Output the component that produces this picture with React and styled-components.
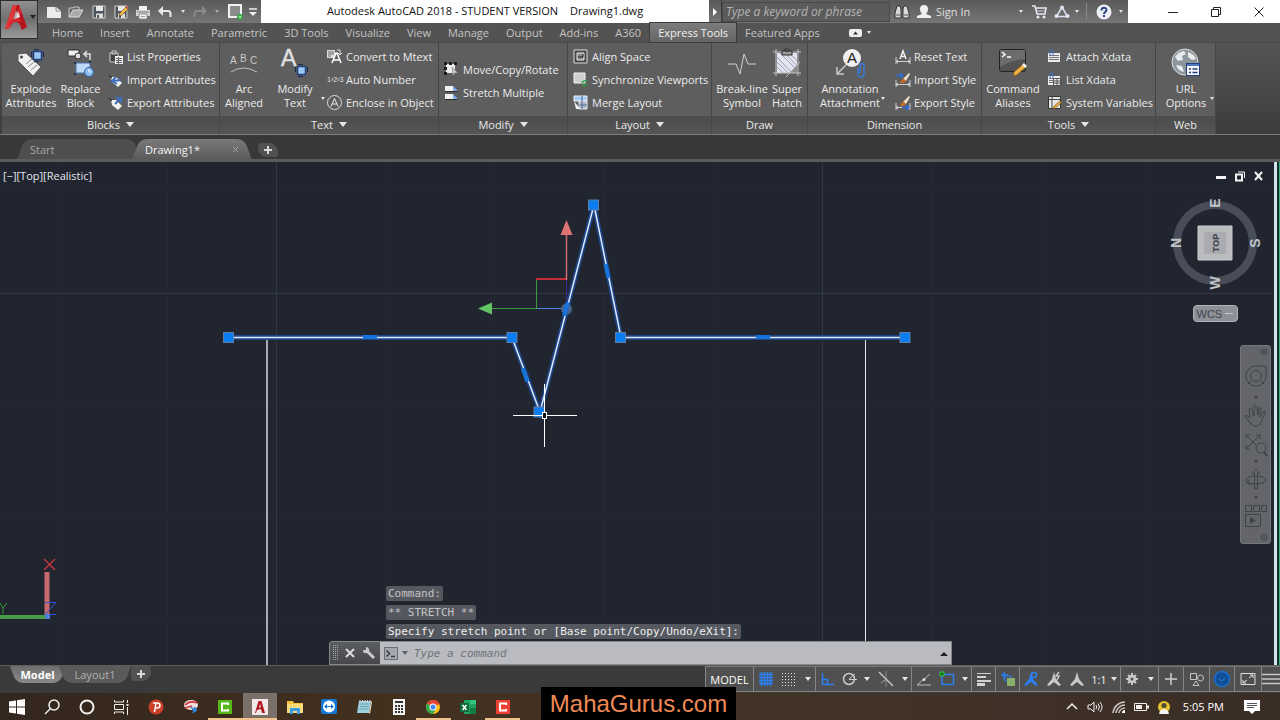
import React from 'react';
import styled, { createGlobalStyle } from 'styled-components';

const GlobalStyle = createGlobalStyle`
  * {
    box-sizing: border-box;
  }
  body {
    margin: 0;
    background: #3b3b3b;
    font-family: 'Open Sans', 'Noto Sans', sans-serif;
    font-size: 11px;
  }
  button, input {
    font: inherit;
    color: inherit;
    margin: 0;
    padding: 0;
    border: 0;
    background: none;
  }
  svg {
    display: block;
    flex: none;
  }
`;

const Svg = ({ w = 16, h = w, children }) => (
  <svg width={w} height={h} viewBox={`0 0 ${w} ${h}`} fill='none' overflow='visible'>
    {children}
  </svg>
);

/* ---------- shared pieces ---------- */

const Caret = styled.span`
  align-self: center;
  width: 0;
  height: 0;
  border: ${(p) => p.$size || 3}px solid transparent;
  border-bottom-width: 0;
  border-top: ${(p) => (p.$size || 3) + 1}px solid ${(p) => p.$color || '#e6e6e6'};
`;

const IconButton = styled.button`
  display: flex;
  align-items: center;
  justify-content: center;
  width: ${(p) => p.$width || 20}px;
  height: 100%;
`;

/* ---------- title bar ---------- */

const Header = styled.header`
  position: relative;
`;

const AppButton = styled.button`
  position: absolute;
  left: 0;
  top: 0;
  z-index: 2;
  display: flex;
  align-items: center;
  gap: 3px;
  width: 38px;
  height: 39px;
  padding: 0 0 6px 4px;
  border: 1px solid #2c2c2c;
  background: linear-gradient(#8f8f8f, #6f6f6f 50%, #9a9a9a);
`;

const TitleBar = styled.div`
  display: flex;
  height: 23px;
  background: #fff;
`;

const QuickAccess = styled.div`
  display: flex;
  align-items: center;
  justify-content: space-between;
  width: 261px;
  padding: 0 2px 0 44px;
  background: linear-gradient(#5a5a5a, #757575);
`;

const Title = styled.h1`
  flex: 1;
  display: flex;
  justify-content: center;
  gap: 12px;
  margin: 0;
  color: #111;
  font-size: 11px;
  font-weight: 400;
  line-height: 22px;
  white-space: pre;
`;

const InfoCenter = styled.div`
  display: flex;
  align-items: center;
  width: 419px;
  background: linear-gradient(#5a5a5a, #757575);
  color: #e0e0e0;
`;

const SearchToggle = styled(IconButton)`
  border-right: 1px solid #3a3a3a;
`;

const SearchInput = styled.input`
  width: 168px;
  height: 20px;
  padding: 0 3px;
  background: #5b5b5b;
  border: 1px solid #4a4a4a;
  font-size: 12px;
  font-style: italic;
  &::placeholder {
    color: #b4b4b4;
    opacity: 1;
  }
`;

const SignIn = styled.button`
  display: flex;
  align-items: center;
  justify-content: space-between;
  gap: 4px;
  width: 115px;
  padding: 0 6px 0 2px;
`;

const UserName = styled.span`
  flex: 1;
  text-align: left;
`;

const Divider = styled.span`
  width: 1px;
  height: 17px;
  margin: 0 7px;
  background: #8a8a8a;
`;

const WindowButtons = styled.div`
  display: flex;
  justify-content: flex-end;
  width: 152px;
`;

const MenuTabs = styled.nav`
  display: flex;
  align-items: stretch;
  gap: 1px;
  height: 19px;
  padding-left: 44px;
  background: #535353;
`;

const MenuTab = styled.button`
  padding: 0 8px;
  line-height: 18px;
  white-space: nowrap;
  color: ${(p) => (p.$active ? '#f0f0f0' : '#c4c4c4')};
  background: ${(p) => (p.$active ? 'linear-gradient(#7c7c7c, #656565)' : 'none')};
  box-shadow: ${(p) => (p.$active ? '0 0 0 1px #3c3c3c' : 'none')};
`;

const MenuMore = styled.button`
  display: flex;
  align-items: center;
  gap: 5px;
  margin-left: 20px;
`;

/* ---------- ribbon ---------- */

const Ribbon = styled.section`
  display: flex;
  height: 93px;
  padding-left: 2px;
  background: linear-gradient(#555, #3c3c3c);
  border-top: 1px solid #484848;
  border-bottom: 1px solid #7c7c7c;
`;

const Panel = styled.div`
  display: flex;
  flex-direction: column;
  width: ${(p) => p.$width}px;
  border-right: 1px solid #464646;
  box-shadow: inset -1px 0 #6c6c6c;
`;

const PanelBody = styled.div`
  flex: 1;
  display: flex;
  align-items: flex-start;
  padding: 2px 0 0 ${(p) => p.$pad || 0}px;
  background: #5e5e5e;
`;

const PanelTitle = styled.button`
  display: flex;
  align-items: center;
  justify-content: center;
  gap: 6px;
  height: 18px;
  padding-bottom: 1px;
  color: #e8e8e8;
  background: linear-gradient(#4c4c4c, #555);
`;

const BigButton = styled.button`
  position: relative;
  display: flex;
  flex-direction: column;
  align-items: center;
  width: ${(p) => p.$width}px;
  height: 70px;
  color: #ececec;
  line-height: 14px;
  white-space: pre;
`;

const BigIcon = styled.span`
  display: flex;
  align-items: center;
  justify-content: center;
  height: 36px;
  margin-bottom: 1px;
`;

const BigCaret = styled(Caret)`
  position: absolute;
  right: -2px;
  bottom: 15px;
`;

const RowList = styled.div`
  display: flex;
  flex-direction: column;
  align-self: ${(p) => (p.$centered ? 'center' : 'flex-start')};
  padding-left: ${(p) => p.$left || 0}px;
`;

const Row = styled.button`
  display: flex;
  align-items: center;
  gap: 4px;
  height: 23px;
  color: #ececec;
  white-space: nowrap;
`;

const RowIcon = styled.span`
  display: flex;
  justify-content: center;
  width: 15px;
`;

/* ---------- drawing tabs ---------- */

const FileTabs = styled.div`
  display: flex;
  align-items: flex-end;
  height: 27px;
  padding-left: 21px;
  background: #383838;
  border-bottom: 3px solid #5c5c5c;
`;

const TabShape = styled.button`
  position: relative;
  z-index: 0;
  display: flex;
  align-items: center;
  &::before,
  &::after {
    content: '';
    position: absolute;
    z-index: -1;
    top: 0;
    bottom: 0;
    background: ${(p) => p.$fill};
  }
  &::before {
    left: 0;
    right: 50%;
    border-radius: ${(p) => (p.$down ? '0 0 0 7px' : '7px 0 0 0')};
    transform: skewX(${(p) => (p.$down ? 20 : -20)}deg);
  }
  &::after {
    left: calc(50% - 12px);
    right: 0;
    border-radius: ${(p) => (p.$down ? '0 0 7px 0' : '0 7px 0 0')};
    transform: skewX(${(p) => (p.$down ? -20 : 20)}deg);
  }
`;

const FileTab = styled(TabShape)`
  justify-content: space-between;
  width: ${(p) => p.$width}px;
  height: 20px;
  padding: 0 9px;
  color: ${(p) => (p.$active ? '#f2f2f2' : '#a8a8a8')};
`;

const NewTab = styled.button`
  display: flex;
  align-items: center;
  justify-content: center;
  width: 20px;
  height: ${(p) => p.$height}px;
  margin: 0 0 ${(p) => p.$bottom || 0}px ${(p) => p.$left}px;
  background: #525252;
  border-radius: ${(p) => (p.$bottom ? '3px 9px 3px 9px' : '2px 2px 9px 3px')};
`;

/* ---------- canvas ---------- */

const Canvas = styled.main`
  position: relative;
  flex: 1;
  min-height: 503px;
  overflow: hidden;
  background: #212530;
  border-right: 1px solid #3fae86;
  box-shadow: inset -2px 0 #12302c, inset -5px 0 #d4e4ee;
`;

const Drawing = styled.svg`
  position: absolute;
  left: 0;
  top: 0;
  width: calc(100% - 5px);
  height: 100%;
`;

const ViewportBar = styled.div`
  position: relative;
  display: flex;
  justify-content: space-between;
  align-items: center;
  height: 27px;
  padding: 0 11px 0 3px;
  color: #e4e6ea;
`;

const ViewportButtons = styled.div`
  display: flex;
  gap: 1px;
  height: 18px;
`;

const ViewTools = styled.div`
  position: absolute;
  right: 17px;
  top: 30px;
  display: flex;
  flex-direction: column;
  align-items: center;
`;

const WcsButton = styled.button`
  display: flex;
  align-items: center;
  justify-content: space-between;
  width: 45px;
  height: 17px;
  margin-top: 8px;
  padding: 0 4px 0 3px;
  border: 1px solid #b2b4ba;
  border-radius: 4px;
  background: #8e9098;
  color: #40434c;
  font-family: 'Liberation Sans', sans-serif;
`;

const NavBar = styled.div`
  position: absolute;
  right: 8px;
  top: 183px;
  display: flex;
  flex-direction: column;
  align-items: center;
  justify-content: space-between;
  width: 31px;
  height: 199px;
  padding: 1px 0;
  border: 1px solid #74767b;
  border-radius: 3px;
  background: #63656a;
`;

const NavButton = styled.button`
  display: flex;
  align-items: center;
  justify-content: center;
  width: ${(p) => (p.$end ? 12 : 29)}px;
  height: ${(p) => p.$height}px;
  align-self: ${(p) => (p.$end ? 'flex-end' : 'auto')};
`;

const CommandArea = styled.div`
  position: absolute;
  left: 329px;
  right: 327px;
  bottom: 0;
  font-family: 'DejaVu Sans Mono', monospace;
`;

const History = styled.div`
  display: flex;
  flex-direction: column;
  align-items: flex-start;
  gap: 4px;
  padding: 0 0 2px 57px;
`;

const HistoryLine = styled.span`
  padding: 0 2px;
  border-radius: 2px;
  line-height: 15px;
  background: #55585e;
  color: ${(p) => (p.$latest ? '#f0f0f0' : '#c2c3c6')};
`;

const CommandBar = styled.div`
  display: flex;
  height: 24px;
  border: 1px solid #85878b;
  border-radius: 3px 0 0 0;
  background: #b9bbc0;
`;

const CommandHandle = styled.div`
  display: flex;
  align-items: center;
  justify-content: space-between;
  width: 50px;
  padding: 0 2px;
  background: linear-gradient(#5b5d61, #45474b);
`;

const CommandInput = styled.input`
  flex: 1;
  min-width: 0;
  padding: 0 6px;
  font-style: italic;
  &::placeholder {
    color: #70737a;
    opacity: 1;
  }
`;

/* ---------- status bar ---------- */

const StatusBar = styled.footer`
  display: flex;
  justify-content: space-between;
  height: 28px;
  background: #3a3a3a;
  border-top: 1px solid #5c5c5c;
`;

const LayoutTabs = styled.div`
  display: flex;
  align-items: flex-start;
  padding-left: 13px;
`;

const LayoutTab = styled(TabShape)`
  justify-content: center;
  width: ${(p) => p.$width}px;
  height: 17px;
  color: ${(p) => (p.$active ? '#fff' : '#b0b0b0')};
  font-weight: ${(p) => (p.$active ? 700 : 400)};
`;

const StatusTools = styled.div`
  display: flex;
  height: 26px;
  background: #505050;
  border-top: 1px solid #777;
  border-bottom: 1px solid #858585;
`;

const StatusGroup = styled.div`
  display: flex;
  align-items: center;
  justify-content: space-around;
  width: ${(p) => p.$width}px;
  border-left: 1px solid #858585;
`;

const StatusText = styled.button`
  width: 100%;
  color: #fff;
`;

const ScaleButton = styled.button`
  display: flex;
  align-items: center;
  gap: 4px;
  color: #f0f0f0;
`;

/* ---------- taskbar ---------- */

const Taskbar = styled.nav`
  position: relative;
  display: flex;
  justify-content: space-between;
  height: 27px;
  background: linear-gradient(90deg, #33261e, #42301f 30%, #433428 60%, #3a2d25);
`;

const TaskGroup = styled.div`
  display: flex;
  width: ${(p) => p.$width}px;
`;

const TaskButton = styled.button`
  flex: 1;
  display: flex;
  align-items: center;
  justify-content: center;
  background: ${(p) => (p.$current ? '#7b7069' : 'none')};
  box-shadow: ${(p) => (p.$open ? 'inset 0 -2px #f0c48c' : 'none')};
`;

const Tray = styled.div`
  display: flex;
  align-items: center;
  padding-right: 18px;
  color: #fff;
`;

const Clock = styled.span`
  padding: 0 18px 0 8px;
`;

const Watermark = styled.div`
  position: absolute;
  left: calc(50% - 99px);
  bottom: 0;
  width: 195px;
  height: 33px;
  background: #000;
  color: #f08a55;
  font-family: 'Liberation Sans', sans-serif;
  font-size: 24px;
  line-height: 33px;
  text-align: center;
`;

const Page = styled.div`
  display: flex;
  flex-direction: column;
  min-height: 100vh;
`;

/* ---------- icons ---------- */

const AutocadMark = () => (
  <Svg w={22} h={26}>
    <path d='M8 1h6l8 22-5 3-3-7-6-2-3 7-5 1z' fill='#b3161d' />
    <path d='M8 1h4L5 24l-5 1z' fill='#e2383c' />
    <path d='M14 1l3 8-6 6-3 1 5-9z' fill='#d3272d' />
    <path d='M11 6l3 8-6 2z' fill='#b9a5a5' />
    <path d='M3 20q4-6 12-6l1 4q-7-1-12 4z' fill='#d8262c' />
    <path d='M13 7l2 6-4 1z' fill='#efe4e4' />
  </Svg>
);

const NewIcon = () => (
  <Svg w={16}>
    <path d='M1 3h9l5 4v7H1z' fill='#ececec' />
    <path d='M10 3v4h5' stroke='#8a8a8a' />
  </Svg>
);

const OpenIcon = () => (
  <Svg w={16}>
    <path d='M1 13V4h4l1-1h5v3' stroke='#c8c8c8' />
    <path d='M1 13l4-7h10l-4 7z' fill='#a9a9a9' stroke='#d9d9d9' />
  </Svg>
);

const SaveIcon = ({ pencil }) => (
  <Svg w={16}>
    <path d='M2 2h12v12H2z' fill='#4f545c' stroke='#cfd2d6' />
    <path d='M5 2h7v5H5z' fill='#e8e8e8' />
    <path d='M5 9.500h7V14H5z' fill='#dcdcdc' />
    <path d='M6 11h2v3H6z' fill='#555' />
    {pencil && (
      <g>
        <path d='M6 12l1-3 6-6 2 2-6 6z' fill='#f2bd4b' stroke='#6a4a1c' strokeWidth='.6' />
        <path d='M12.500 3.500l1.500-1.500 2 2-1.500 1.500z' fill='#d24a3a' />
      </g>
    )}
  </Svg>
);

const PrintIcon = () => (
  <Svg w={16}>
    <path d='M4 2h8v4H4z' fill='#efefef' />
    <path d='M1 6h14v6H1z' fill='#d6d6d6' />
    <path d='M2 8h12' stroke='#777' />
    <path d='M4 10h8v5H4z' fill='#f6f6f6' stroke='#888' />
    <path d='M6 12.500h4' stroke='#999' />
  </Svg>
);

const UndoIcon = ({ color = '#e8e8e8', flip }) => (
  <Svg w={16}>
    <g transform={flip ? 'translate(16 0) scale(-1 1)' : undefined}>
      <path d='M5 7h6q2.500 0 2.500 3v3' stroke={color} strokeWidth='2' />
      <path d='M1 7l5-5v10z' fill={color} />
    </g>
  </Svg>
);

const PlotIcon = () => (
  <Svg w={16}>
    <path d='M2 1h12v12H2z' fill='#8c8c8c' stroke='#f0f0f0' strokeWidth='2' />
    <circle cx='13' cy='13' r='3' fill='#2fa33a' />
    <path d='M11.500 13h3M13 11.500v3' stroke='#b9f0b9' />
  </Svg>
);

const BarCaretIcon = () => (
  <Svg w={10}>
    <path d='M1 2h8' stroke='#eee' strokeWidth='1.500' />
    <path d='M1 5h8L5 9z' fill='#eee' />
  </Svg>
);

const BinocularsIcon = () => (
  <Svg w={16}>
    <path d='M3 2h3l1 3v9H1V9z' fill='#d8d8d8' stroke='#333' />
    <path d='M13 2h-3L9 5v9h6V9z' fill='#d8d8d8' stroke='#333' />
    <path d='M7 6h2v4H7z' fill='#555' />
    <path d='M2 11h4M10 11h4' stroke='#555' />
  </Svg>
);

const UserIcon = () => (
  <Svg w={16}>
    <path d='M8 1c3 0 4 2 4 4 0 2-1 4-2 5l5 2v2H1v-2l5-2C5 9 4 7 4 5c0-2 1-4 4-4z' fill='#f0f0f0' />
  </Svg>
);

const CartIcon = () => (
  <Svg w={16}>
    <path d='M1 2h3l2 8h8l1-6H5' stroke='#e6e8f2' strokeWidth='1.500' />
    <path d='M6 7h8' stroke='#c3c8de' />
    <circle cx='7' cy='13' r='1.500' fill='#e6e8f2' />
    <circle cx='13' cy='13' r='1.500' fill='#e6e8f2' />
  </Svg>
);

const ShareIcon = () => (
  <Svg w={16}>
    <path d='M8 3L2.500 12.500h11z' stroke='#dfe2f0' strokeWidth='1.500' />
    <circle cx='8' cy='3.500' r='2' fill='#dfe2f0' />
    <circle cx='2.500' cy='12' r='2' fill='#dfe2f0' />
    <circle cx='13.500' cy='12' r='2' fill='#dfe2f0' />
  </Svg>
);

const HelpIcon = () => (
  <Svg w={16}>
    <circle cx='8' cy='8' r='7.500' fill='#eef0f6' />
    <path d='M5.500 6.500c0-3.500 5-3.500 5-.5 0 2-2.500 2-2.500 4' stroke='#2c4586' strokeWidth='2' />
    <path d='M7 11h2v2H7z' fill='#2c4586' />
  </Svg>
);

const MinimizeIcon = () => (
  <Svg w={12}><path d='M1 6.500h10' stroke='#222' /></Svg>
);

const RestoreIcon = () => (
  <Svg w={12}>
    <path d='M1.500 3.500h7v7h-7z' stroke='#222' />
    <path d='M3.500 3.500v-2h7v7h-2' stroke='#222' />
  </Svg>
);

const CloseIcon = () => (
  <Svg w={12}><path d='M1.500 1.500l9 9M10.500 1.500l-9 9' stroke='#222' /></Svg>
);

const BlockSquare = ({ x, y }) => (
  <g transform={`translate(${x} ${y})`}>
    <path d='M2.500 2.500h8v8h-8z' fill='#9cc6f5' stroke='#1f3f7a' strokeWidth='1.500' />
    <path d='M.5 3v7M12.500 3v7M3 .5h7M3 12.500h7' stroke='#15294d' strokeDasharray='5 2' />
  </g>
);

const ExplodeIcon = () => (
  <Svg w={30} h={30}>
    <path d='M2 6l8-1 15 14-8 9L2 13z' fill='#f0f0f0' stroke='#555' />
    <circle cx='5.500' cy='9' r='1.500' fill='#444' />
    <path d='M10 16l6-5M12 19l6-5M15 22l6-5' stroke='#888' />
    <BlockSquare x={15} y={1} />
  </Svg>
);

const ReplaceIcon = () => (
  <Svg w={30} h={30}>
    <path d='M2 2h11v6H2z' fill='#f1f1f1' stroke='#2c2c2c' />
    <circle cx='12' cy='8' r='3' fill='#ddd' stroke='#333' />
    <path d='M24 12V6h-5M21 3l-3 3 3 3' stroke='#ddd' strokeWidth='1.500' />
    <path d='M10 15h14v10H10z' fill='#bcd9f8' stroke='#4a6ea8' />
    <circle cx='23' cy='24' r='4.500' fill='#8dbdf0' stroke='#2f62a8' />
    <path d='M23 21v3h2' stroke='#fff' />
    <path d='M8 14h2v2H8zM23 13h2v2h-2zM8 25h2v2H8z' fill='#1d3358' />
  </Svg>
);

const ArcIcon = () => (
  <Svg w={30} h={26}>
    <path d='M2 22q12-8 26 0' stroke='#c4c4c4' />
    <g fill='#c9c9c9' fontFamily='Liberation Sans, sans-serif' fontSize='10'>
      <text x='1' y='14'>A</text>
      <text x='11' y='12'>B</text>
      <text x='21' y='14'>C</text>
    </g>
  </Svg>
);

const ModifyTextIcon = () => (
  <Svg w={30} h={30}>
    <text x='1' y='18' fill='#e0e0e0' stroke='#e0e0e0' strokeWidth='.5' fontFamily='Liberation Sans, sans-serif' fontSize='23'>A</text>
    <BlockSquare x={15} y={16} />
  </Svg>
);

const BreakIcon = () => (
  <Svg w={30} h={26}>
    <path d='M1 14h8l4 10 4-20 4 10h8' stroke='#cfcfcf' />
  </Svg>
);

const HatchIcon = () => (
  <Svg w={30} h={30}>
    <path d='M5 5h20v14l-6 6H5z' fill='#e4e5f0' />
    <path d='M5 9l14 15M5 14l11 11M5 19l6 6M8 5l16 16M13 5l12 13M18 5l7 8' stroke='#9a9db4' />
    <path d='M25 17l-8 8h8z' fill='#8a8a8a' />
    <path d='M4 1v27M26 1v27M1 4h28M1 25h28' stroke='#c4c4c4' />
    <path d='M10 3h10v4H10zM13 1h4v2h-4z' fill='#999' stroke='#2f2f2f' />
    <path d='M28 14L14 29' stroke='#bdbdbd' />
  </Svg>
);

const AnnotationIcon = () => (
  <Svg w={30} h={30}>
    <circle cx='17' cy='10' r='9' fill='#f0f0f0' />
    <text x='12' y='15' fill='#222' fontFamily='Liberation Sans, sans-serif' fontSize='15'>A</text>
    <path d='M11 17l-8 8M2 19v7h7' stroke='#c8c8c8' strokeWidth='1.500' />
    <path d='M23 20v6q0 3 3 3t3-3v-8q0-2.500-2-2.500t-2 2.500v7' stroke='#3a7ad6' strokeWidth='1.500' />
  </Svg>
);

const AliasIcon = () => (
  <Svg w={30} h={30}>
    <rect x='1.500' y='1.500' width='26' height='22' rx='2' fill='#525252' stroke='#222' />
    <path d='M2 2h25v9q-13 1-25 8z' fill='#6c6c6c' />
    <path d='M4 4l3 2.500L4 9M9 9h4' stroke='#fff' strokeWidth='1.500' />
    <path d='M15 28l1-4 9-8 3 3-9 8z' fill='#f0b040' stroke='#6b4a16' strokeWidth='.7' />
    <path d='M24 17l2-2 3 3-2 2z' fill='#eee' />
  </Svg>
);

const UrlIcon = () => (
  <Svg w={30} h={30}>
    <circle cx='14' cy='14' r='13' fill='#8d969c' stroke='#d9dcde' />
    <path d='M4 9q3-5 9-6l2 3-4 2 1 4-5 1zM17 4q6 2 8 7l-4 1-4-3zM5 17l6 1 2 6q-6-1-8-7z' fill='#e8ecee' />
    <rect x='15.500' y='15.500' width='13' height='12' fill='#f4f6fa' stroke='#24407a' />
    <path d='M16 17h12' stroke='#4c77c4' strokeWidth='2' />
    <path d='M18 21h2M18 24.500h2M21.500 21h5M21.500 24.500h5' stroke='#24407a' strokeWidth='1.500' />
  </Svg>
);

const ListPropsIcon = () => (
  <Svg w={14}>
    <path d='M1 3h8v9H1zM3 1h4v3H3z' fill='#444' stroke='#cacaca' />
    <path d='M6 6h8v8H6z' fill='#efefef' />
    <path d='M7 8.500h6M7 10.500h6M7 12.500h6M9.500 7v7' stroke='#666' />
  </Svg>
);

const TagArrowIcon = ({ flip }) => (
  <Svg w={14}>
    <path d='M2 4l5 0 6 6-4 4-6-5z' fill='#efefef' />
    <path d={flip ? 'M6 8l5-5M7 2l5 0 0 5' : 'M12 7L4 8M7 4L3 8l5 3'} stroke='#3f6fc0' strokeWidth='2' />
    <path d='M0 2l3 3' stroke='#222' />
  </Svg>
);

const MtextIcon = () => (
  <Svg w={15}>
    <path d='M0 1h8v8H0z' fill='#dcdcdc' />
    <path d='M1 3h6M1 5h6M1 7h3' stroke='#666' />
    <path d='M5 14L9 4h1l4 10M6.500 11h6' stroke='#fff' strokeWidth='1.500' />
    <path d='M10 1h3v4M11 4l2 2 2-2' stroke='#ddd' />
  </Svg>
);

const NumberIcon = () => (
  <Svg w={15}>
    <text x='0' y='10' fill='#e0e0e0' fontFamily='Liberation Sans, sans-serif' fontSize='7'>1›2›3</text>
  </Svg>
);

const EncloseIcon = () => (
  <Svg w={15}>
    <circle cx='7.500' cy='7.500' r='7' stroke='#dcdcdc' />
    <path d='M4 11.500l3.500-8 3.500 8M5.500 9h4' stroke='#eee' />
  </Svg>
);

const MoveCopyIcon = () => (
  <Svg w={15}>
    <path d='M2 2h9v9H2z' fill='#eee' />
    <path d='M0 0h3v3H0zM5 0h3v3H5zM10 0h3v3h-3zM0 5h3v3H0zM0 10h3v3H0z' fill='#1c1c1c' />
    <path d='M8 5l6 6-3 0-2 3z' fill='#c8c8c8' stroke='#666' strokeWidth='.5' />
  </Svg>
);

const StretchIcon = () => (
  <Svg w={15}>
    <path d='M1 1h8v5H1zM1 9h8v5H1z' fill='#f0f0f0' />
    <path d='M9 1l5 5H9zM9 9l5 5H9z' fill='#7fb0ee' />
    <path d='M1 6.500h13M1 14.500h13' stroke='#2a2a2a' />
  </Svg>
);

const AlignSpaceIcon = () => (
  <Svg w={15}>
    <path d='M1 1h13v13H1z' fill='#444' stroke='#ddd' />
    <path d='M4 4h7v7H4z' fill='#888' stroke='#eee' />
    <path d='M5 8h5V5' stroke='#222' />
  </Svg>
);

const SyncIcon = () => (
  <Svg w={15}>
    <path d='M1 1h11v10H1z' fill='#cfcfcf' stroke='#f3f3f3' />
    <path d='M9 11a3 3 0 0 1 5-1M14 12a3 3 0 0 1-5 1' stroke='#2ea043' strokeWidth='1.500' />
  </Svg>
);

const MergeIcon = () => (
  <Svg w={15}>
    <path d='M1 1h13v5H1z' fill='#a8cbf5' stroke='#e8eef6' />
    <path d='M6 6h8v8H6z' fill='#b4b9c2' stroke='#e8eef6' />
    <path d='M9 1v13M6 10h8' stroke='#4a6a9c' />
    <path d='M1 6l6 8H3z' fill='#f3f3f3' />
  </Svg>
);

const DimIcon = ({ kind }) => (
  <Svg w={16}>
    <path d='M1 8v7M15 8v7M1 12.500h14M3 11l-2 1.500L3 14M13 11l2 1.500-2 1.500' stroke='#cfcfcf' />
    {kind === 'reset' ? (
      <g>
        <path d='M5 10l3-8 3 8M6 7.500h4' stroke='#f2f2f2' strokeWidth='1.500' />
        <path d='M12 1l2 2-2 2' stroke='#3f6fc0' />
      </g>
    ) : (
      <g>
        <path d='M8 7l6-6 1 1-4 7z' fill='#f0e3c8' />
        <path d='M5 11q1-4 4-4l2 2q-2 3-6 2z' fill='#c46a2c' />
        <path
          d={kind === 'import' ? 'M1 3.500h6M5 1l3 2.500L5 6' : 'M7 12.500h6M11 10l3 2.500-3 2.500'}
          stroke='#2f6fd6'
          strokeWidth='1.500'
        />
      </g>
    )}
  </Svg>
);

const XdataIcon = ({ table }) => (
  <Svg w={15}>
    <path d='M1 4h12v9H1z' fill='#ececec' />
    <path d='M2 6.500h10M2 8.500h10M2 10.500h10' stroke='#777' />
    {table && <path d='M6.500 6.500h7v7h-7zM6.500 9h7M6.500 11h7M10 7v6' fill='#e8e8e8' stroke='#555' />}
    <path d='M3 7V2q0-1.500 1.500-1.500T6 2v4' stroke='#3f6fc0' />
  </Svg>
);

const SysVarIcon = () => (
  <Svg w={15}>
    <path d='M1.500 1.500h12v12h-12z' fill='#e8e8e8' stroke='#333' />
    <path d='M5 2v11M2 4.500h11' stroke='#444' />
    <path d='M6 14l1-3 6-5 1.500 1.500-6 5.500z' fill='#f0a840' stroke='#6b4a16' strokeWidth='.6' />
  </Svg>
);

const PlusIcon = () => (
  <Svg w={10}><path d='M5 1v8M1 5h8' stroke='#d8d8d8' strokeWidth='2' /></Svg>
);

const TabCloseIcon = () => (
  <Svg w={7}><path d='M1 1l5 5M6 1L1 6' stroke='#a4a4a4' /></Svg>
);

/* status bar icons */

const GridIcon = () => (
  <Svg w={16}>
    <path d='M3.500 1v14M6.500 1v14M9.500 1v14M12.500 1v14M1 3.500h14M1 6.500h14M1 9.500h14M1 12.500h14' stroke='#2b7ff0' strokeWidth='1.500' />
  </Svg>
);

const SnapIcon = () => (
  <Svg w={16}>
    {[2, 5, 8, 11, 14].map((y) => (
      <path key={y} d={`M1 ${y}.5h14`} stroke='#e4e4e4' strokeDasharray='1 2' />
    ))}
  </Svg>
);

const OrthoIcon = () => (
  <Svg w={16}>
    <path d='M3.500 2v11.500H15M3.500 8.500h5v5' stroke='#2b7ff0' strokeWidth='1.500' />
  </Svg>
);

const PolarIcon = () => (
  <Svg w={16}>
    <circle cx='7' cy='8' r='5.500' stroke='#ccc' strokeWidth='1.500' />
    <path d='M7 8.500h8M7 8l6-5' stroke='#ccc' />
  </Svg>
);

const IsoIcon = () => (
  <Svg w={18}>
    <path d='M9 1v16' stroke='#888' />
    <path d='M2 2l14 14' stroke='#c4c4c4' strokeWidth='1.500' />
    <path d='M4 13l4-3' stroke='#aaa' />
  </Svg>
);

const TrackIcon = () => (
  <Svg w={16}>
    <path d='M1 14L14 3M1 14h14' stroke='#bdbdbd' />
    <circle cx='8' cy='8.500' r='1.500' fill='#ddd' />
  </Svg>
);

const OsnapIcon = () => (
  <Svg w={16}>
    <path d='M3 3.500h11.500v10H3z' stroke='#2b7ff0' strokeWidth='1.500' />
    <path d='M1 1h4v4H1z' fill='#0d6b12' stroke='#37c242' />
  </Svg>
);

const LineweightIcon = () => (
  <Svg w={16}>
    <path d='M1 2.500h14' stroke='#d2d2d2' />
    <path d='M1 6h9' stroke='#d2d2d2' strokeWidth='2' />
    <path d='M1 10h14' stroke='#d2d2d2' strokeWidth='2' />
    <path d='M1 13.500h8' stroke='#d2d2d2' strokeWidth='3' />
  </Svg>
);

const CyclingIcon = () => (
  <Svg w={16}>
    <path d='M4 1v7M1 4h7' stroke='#2b7ff0' strokeWidth='1.500' />
    <path d='M5 5h6v5H5z' stroke='#2b7ff0' />
    <path d='M7 7h8v8H7z' fill='#88b06a' />
  </Svg>
);

const ScaleIcon = ({ color, extra }) => (
  <Svg w={16}>
    <path d='M8 1l2 7 5 6-2 1-5-4-5 4-2-1 5-6z' fill={color} />
    {extra === 'ring' && <circle cx='11' cy='4' r='2.500' fill='#505050' stroke={color} strokeWidth='1.500' />}
    {extra === 'bolt' && <path d='M13 1l-3 4h3l-2 4' stroke={color} strokeWidth='1.500' />}
  </Svg>
);

const GearIcon = () => (
  <Svg w={14}>
    <path d='M7 1v12M1 7h12M3 3l8 8M11 3l-8 8' stroke='#c8c8c8' strokeWidth='2' />
    <circle cx='7' cy='7' r='4' fill='#c8c8c8' />
    <circle cx='7' cy='7' r='1.500' fill='#505050' />
  </Svg>
);

const CrossIcon = () => (
  <Svg w={14}><path d='M7 1v12M1 7h12' stroke='#d0d0d0' strokeWidth='1.500' /></Svg>
);

const ShapesIcon = () => (
  <Svg w={16}>
    <path d='M1.500 2.500h6v6h-6z' stroke='#c4c4c4' />
    <circle cx='11.500' cy='7' r='3' stroke='#c4c4c4' />
    <path d='M7 10l3 4.500H4z' stroke='#c4c4c4' />
  </Svg>
);

const HardwareIcon = () => (
  <Svg w={18}>
    <circle cx='9' cy='9' r='7.500' fill='#0f4f96' stroke='#1a6ed0' strokeWidth='1.500' />
    <path d='M6 9l3 2 3-3' stroke='#2f7cd8' />
  </Svg>
);

const CleanIcon = () => (
  <Svg w={16}>
    <path d='M1 2.500h14v11H1z' stroke='#dedede' />
    <path d='M9 7l4-3M10 4h3v3M7 9l-4 3M3 9v3h3' stroke='#dedede' />
  </Svg>
);

const MenuIcon = () => (
  <Svg w={18}><path d='M0 4.500h18M0 9h18M0 13.500h18' stroke='#c8c8c8' strokeWidth='1.500' /></Svg>
);

/* taskbar icons */

const TASKS = [
  {
    name: 'Start',
    icon: (
      <Svg w={16}><path d='M0 2.500l7-1v6H0zM8 1.300L16 0v7.500H8zM0 8.500h7v6l-7-1zM8 8.500h8V16l-8-1.300z' fill='#fff' /></Svg>
    ),
  },
  {
    name: 'Search',
    icon: (
      <Svg w={16}>
        <circle cx='10' cy='6' r='5' stroke='#eee' strokeWidth='1.500' />
        <path d='M6.500 9.500L1 15' stroke='#eee' strokeWidth='1.500' />
      </Svg>
    ),
  },
  { name: 'Cortana', icon: <Svg w={16}><circle cx='8' cy='8' r='6.500' stroke='#f2f2f2' strokeWidth='2' /></Svg> },
  {
    name: 'Task View',
    icon: (
      <Svg w={16}>
        <path d='M1.500 5.500h9v5h-9zM1.500 1v2h9V1M1.500 15v-2h9v2M14.500 1v3M14.500 8v8' stroke='#f0f0f0' />
        <path d='M13.500 5h2v2h-2z' fill='#f0f0f0' />
      </Svg>
    ),
  },
  {
    name: 'PicPick',
    icon: (
      <Svg w={16}>
        <circle cx='8' cy='8' r='7.500' fill='#cc3f28' />
        <path d='M5 4h4q3 0 3 2.500T9 9H7.500M8 4L6.500 13' stroke='#fff' strokeWidth='1.500' />
      </Svg>
    ),
  },
  {
    name: 'Snipping Tool',
    icon: (
      <Svg w={16}>
        <ellipse cx='8' cy='6' rx='7' ry='5' fill='#f0dede' />
        <path d='M2 6q5-5 12-2M2 9l7-2' stroke='#d03a3a' strokeWidth='1.500' />
        <path d='M8 8l4 4M12 8l-2 6' stroke='#2f86d0' strokeWidth='1.500' />
        <circle cx='12' cy='11' r='2' fill='#2f86d0' />
      </Svg>
    ),
  },
  {
    name: 'Camtasia',
    open: true,
    icon: (
      <Svg w={14}>
        <path d='M0 0h14v14H0z' fill='#57b81c' />
        <path d='M10 5V3.500H4v7h6V9' stroke='#fff' strokeWidth='2' />
      </Svg>
    ),
  },
  {
    name: 'AutoCAD',
    open: true,
    current: true,
    icon: (
      <Svg w={16}>
        <path d='M0 0h16v16H0z' fill='#f1e9e9' />
        <path d='M3 14L6.500 2h3L13 14h-3l-1-4-4 1-1 3z' fill='#b3161d' />
        <path d='M8 5l1 3-2 1z' fill='#f1e9e9' />
      </Svg>
    ),
  },
  {
    name: 'File Explorer',
    icon: (
      <Svg w={16}>
        <path d='M0 2h6l1 2h9v10H0z' fill='#f5c13f' />
        <path d='M0 5h16v9H0z' fill='#fbdb7a' />
        <path d='M3 15V9h10v6h-3v-3H6v3z' fill='#3a9ce0' />
      </Svg>
    ),
  },
  {
    name: 'TeamViewer',
    icon: (
      <Svg w={16}>
        <rect width='16' height='15' rx='2' fill='#1278d4' />
        <circle cx='8' cy='7.500' r='6' fill='#fff' />
        <path d='M3 7.500l3-2.500v2h4V5l3 2.500L10 10V8H6v2z' fill='#1278d4' />
      </Svg>
    ),
  },
  {
    name: 'Notepad',
    icon: (
      <Svg w={16}>
        <path d='M3 2h12l-2 12H1z' fill='#9fd0dc' />
        <path d='M4 5h9M4 7.500h9M3 10h9' stroke='#6aa3b3' />
        <path d='M4 1v2M6.500 1v2M9 1v2M11.500 1v2M14 1v2' stroke='#ddd' />
        <path d='M13 14l2-12 1 1-2 12z' fill='#e8dfc8' />
      </Svg>
    ),
  },
  {
    name: 'Calculator',
    icon: (
      <Svg w={12} h={16}>
        <path d='M0 0h12v16H0z' fill='#f4f4f4' />
        <path d='M2 2h8v2H2z' fill='#333' />
        <path d='M2 7h8M2 10h8M2 13h8' stroke='#333' strokeWidth='2' strokeDasharray='2 1' />
      </Svg>
    ),
  },
  {
    name: 'Chrome',
    open: true,
    icon: (
      <Svg w={16}>
        <circle cx='8' cy='8' r='7' fill='#fbc116' />
        <path d='M8 8L2 4.500A7 7 0 0 1 14.500 5z' fill='#ea4335' />
        <path d='M8 8L2 4.500A7 7 0 0 0 8 15l3-5z' fill='#34a853' />
        <circle cx='8' cy='8' r='3.500' fill='#fff' />
        <circle cx='8' cy='8' r='2.500' fill='#4285f4' />
      </Svg>
    ),
  },
  {
    name: 'Excel',
    icon: (
      <Svg w={16}>
        <path d='M4 1h12v14H4z' fill='#21a366' />
        <path d='M10 1h6v4h-6z' fill='#33c481' />
        <path d='M10 9h6v6h-6z' fill='#107c41' />
        <path d='M0 4h9v9H0z' fill='#0f6b38' />
        <path d='M2.500 6l4 5M6.500 6l-4 5' stroke='#fff' strokeWidth='1.500' />
      </Svg>
    ),
  },
  {
    name: 'Recorder',
    open: true,
    icon: (
      <Svg w={14}>
        <path d='M0 0h14v14H0z' fill='#ee4135' />
        <path d='M10 5V3.500H4v7h6V9' stroke='#fff' strokeWidth='2' />
      </Svg>
    ),
  },
];

/* ---------- data ---------- */

const MENU = ['Home', 'Insert', 'Annotate', 'Parametric', '3D Tools', 'Visualize', 'View', 'Manage', 'Output', 'Add-ins', 'A360', 'Express Tools', 'Featured Apps'];

const PANELS = [
  {
    title: 'Blocks', more: true, width: 218, pad: 2,
    big: [
      { text: 'Explode\nAttributes', width: 54, icon: <ExplodeIcon /> },
      { text: 'Replace\nBlock', width: 45, icon: <ReplaceIcon /> },
    ],
    rowsPad: 5,
    rows: [
      ['List Properties', <ListPropsIcon />],
      ['Import Attributes', <TagArrowIcon />],
      ['Export Attributes', <TagArrowIcon flip />],
    ],
  },
  {
    title: 'Text', more: true, width: 219, pad: 1,
    big: [
      { text: 'Arc\nAligned', width: 46, icon: <ArcIcon /> },
      { text: 'Modify\nText', width: 56, caret: true, icon: <ModifyTextIcon /> },
    ],
    rowsPad: 4,
    rows: [
      ['Convert to Mtext', <MtextIcon />],
      ['Auto Number', <NumberIcon />],
      ['Enclose in Object', <EncloseIcon />],
    ],
  },
  {
    title: 'Modify', more: true, width: 129, pad: 5,
    centered: true,
    rows: [
      ['Move/Copy/Rotate', <MoveCopyIcon />],
      ['Stretch Multiple', <StretchIcon />],
    ],
  },
  {
    title: 'Layout', more: true, width: 144, pad: 5,
    rows: [
      ['Align Space', <AlignSpaceIcon />],
      ['Synchronize Viewports', <SyncIcon />],
      ['Merge Layout', <MergeIcon />],
    ],
  },
  {
    title: 'Draw', width: 96, pad: 4,
    big: [
      { text: 'Break-line\nSymbol', width: 52, icon: <BreakIcon /> },
      { text: 'Super\nHatch', width: 38, icon: <HatchIcon /> },
    ],
  },
  {
    title: 'Dimension', width: 174, pad: 9,
    big: [{ text: 'Annotation\nAttachment', width: 66, caret: true, icon: <AnnotationIcon /> }],
    rowsPad: 12,
    rows: [
      ['Reset Text', <DimIcon kind='reset' />],
      ['Import Style', <DimIcon kind='import' />],
      ['Export Style', <DimIcon kind='export' />],
    ],
  },
  {
    title: 'Tools', more: true, width: 174, pad: 2,
    big: [{ text: 'Command\nAliases', width: 58, icon: <AliasIcon /> }],
    rowsPad: 5,
    rows: [
      ['Attach Xdata', <XdataIcon />],
      ['List Xdata', <XdataIcon table />],
      ['System Variables', <SysVarIcon />],
    ],
  },
  {
    title: 'Web', width: 60, pad: 4,
    big: [{ text: 'URL\nOptions', width: 52, caret: true, icon: <UrlIcon /> }],
  },
];

/* ---------- drawing ---------- */

const Grip = ({ x, y }) => <rect x={x - 5} y={y - 5} width='10' height='10' fill='#0a7df2' stroke='#5c7ea8' />;

const MidGrip = ({ x, y, angle = 0 }) => (
  <rect x={x - 7} y={y - 2} width='14' height='4' fill='#1673dc' transform={`rotate(${angle} ${x} ${y})`} />
);

const PROFILE = 'M229 175.500H512L540 250 594 43 621 175.500H905';

const Model = () => (
  <Drawing>
    <g stroke='#252935'>
      {[58, 167, 385, 494, 604, 713, 932, 1041, 1150].map((x) => (
        <path key={x} d={`M${x}.5 0V2000`} />
      ))}
      {[22, 240, 350, 459].map((y) => (
        <path key={y} d={`M0 ${y}.5H4000`} />
      ))}
    </g>
    <path d='M276.500 0V2000M822.500 0V2000M0 131.500H4000' stroke='#323744' />
    <path d='M267 176V2000' stroke='#a9acb2' strokeWidth='2' />
    <path d='M865.500 176V2000' stroke='#e6e6e8' />

    <path d={PROFILE} stroke='#1c4384' strokeWidth='5' fill='none' />
    <path d={PROFILE} stroke='#dfe9fb' strokeWidth='1.500' fill='none' />

    <path d='M566 146.500h-30' stroke='#5286dc' />
    <path d='M536 146.500h-46M536.500 147v-30' stroke='#3d9a3c' />
    <path d='M478 146.500l14-6v12z' fill='#63c463' />
    <path d='M536 117h30' stroke='#c4303a' strokeWidth='2' />
    <path d='M566.500 147v-30' stroke='#3a2a8c' />
    <path d='M566.500 118V72' stroke='#d06a72' strokeWidth='1.500' />
    <path d='M566.500 58l6 15h-12z' fill='#e07474' />

    <circle cx='566.500' cy='147' r='5.500' fill='#44638f' />
    <MidGrip x={566} y={147} angle={-75} />
    <MidGrip x={370} y={175} />
    <MidGrip x={763} y={175} />
    <MidGrip x={525} y={213} angle={70} />
    <MidGrip x={607} y={109} angle={78} />
    <Grip x={228.500} y={175.500} />
    <Grip x={512} y={175.500} />
    <Grip x={539} y={250} />
    <Grip x={593.500} y={43} />
    <Grip x={620.500} y={175.500} />
    <Grip x={905} y={175.500} />

    <path d='M513 253.500h29M547 253.500h30M544.500 222v28M544.500 256v29' stroke='#fff' />
    <rect x='542.500' y='250.500' width='4' height='6' stroke='#fff' fill='#111' />

    <path d='M47 410v46' stroke='#c86a6c' strokeWidth='5' />
    <path d='M0 455h45' stroke='#479a48' strokeWidth='4' />
    <path d='M44 397l11 11M55 397l-11 11' stroke='#c0343c' strokeWidth='1.500' />
    <path d='M0 441l3 5 4-5M3 446v6' stroke='#2f9a38' fill='none' />
    <path d='M45 440.500h11L45 452.500h11' stroke='#2c55d8' fill='none' />
    <rect x='45' y='452' width='5' height='5' fill='#4f7fd8' />
  </Drawing>
);

const ViewCube = () => (
  <Svg w={94} h={105}>
    <circle cx='47' cy='51' r='38' stroke='#484d59' strokeWidth='8' />
    <path d='M30 34h34v34H30z' fill='#b9bbbd' stroke='#c9cbcd' />
    <path d='M36 40h22v22H36z' fill='#a9abaf' />
    <g fill='#c3c5c9' fontFamily='Liberation Sans, sans-serif' fontSize='14' fontWeight='700' textAnchor='middle'>
      <text transform='translate(52 11) rotate(-90)'>E</text>
      <text transform='translate(13 51) rotate(-90)'>N</text>
      <text transform='translate(92 51) rotate(-90)'>S</text>
      <text transform='translate(52 91) rotate(-90)'>W</text>
      <text transform='translate(51 51) rotate(-90)' fill='#3a3e48' fontSize='9'>TOP</text>
    </g>
  </Svg>
);

const navStroke = '#3f4247';

const NavigationBar = () => (
  <NavBar>
    <NavButton $height={9} $end aria-label='Close navigation bar'>
      <Svg w={8}><circle cx='4' cy='4' r='3' stroke={navStroke} /><path d='M2.500 2.500l3 3M5.500 2.500l-3 3' stroke={navStroke} /></Svg>
    </NavButton>
    <NavButton $height={36} aria-label='Steering wheel'>
      <Svg w={24}>
        <path d='M12 2h10v10a10 10 0 1 1-10-10z' stroke={navStroke} />
        <circle cx='12' cy='12' r='5.500' stroke={navStroke} />
        <path d='M17 17l3 3M7 17l-3 3' stroke={navStroke} />
      </Svg>
    </NavButton>
    <Caret $size={2} $color={navStroke} />
    <NavButton $height={28} aria-label='Pan'>
      <Svg w={24}>
        <path
          d='M7 20l-6-8q2-2 5 2L5 5q2-1 3 1l2 6V2q2-1 3 1l1 8 1-7q2-1 2 1l-1 8 4-6q2 0 1 2l-4 9q-1 4-4 4H11q-3 0-4-3z'
          stroke={navStroke}
        />
      </Svg>
    </NavButton>
    <NavButton $height={26} aria-label='Zoom extents'>
      <Svg w={24}>
        <path d='M2 2l14 14M16 2L2 16M2 6V2h4M12 2h4v4M2 12v4h4' stroke={navStroke} />
        <circle cx='17' cy='15' r='5' stroke={navStroke} fill='#63656a' />
        <path d='M20 19l3 4' stroke={navStroke} strokeWidth='2' />
      </Svg>
    </NavButton>
    <Caret $size={2} $color={navStroke} />
    <NavButton $height={28} aria-label='Orbit'>
      <Svg w={24}>
        <ellipse cx='12' cy='13' rx='10' ry='4' stroke={navStroke} />
        <path d='M10.500 22V6H8l4-4 4 4h-2.500v16zM6 12l-3 4 4 2' stroke={navStroke} />
      </Svg>
    </NavButton>
    <Caret $size={2} $color={navStroke} />
    <NavButton $height={30} aria-label='Show motion'>
      <Svg w={24}>
        <path d='M1.500 1.500h6v6h-6zM9.500 1.500h6v6h-6zM17.500 1.500h5v6h-5zM1.500 10.500h15v12h-15z' stroke={navStroke} />
        <path d='M6 13v7l6-3.500z' fill={navStroke} />
      </Svg>
    </NavButton>
    <NavButton $height={9} $end aria-label='Navigation bar options'>
      <Svg w={8}><circle cx='4' cy='4' r='3' stroke={navStroke} /><path d='M2.500 4h3' stroke={navStroke} /></Svg>
    </NavButton>
  </NavBar>
);

const RibbonPanel = ({ panel }) => (
  <Panel $width={panel.width}>
    <PanelBody $pad={panel.pad}>
      {panel.big?.map((b) => (
        <BigButton key={b.text} $width={b.width}>
          <BigIcon>{b.icon}</BigIcon>
          {b.text}
          {b.caret && <BigCaret $size={2} />}
        </BigButton>
      ))}
      {panel.rows && (
        <RowList $centered={panel.centered} $left={panel.rowsPad}>
          {panel.rows.map(([label, icon]) => (
            <Row key={label}>
              <RowIcon>{icon}</RowIcon>
              {label}
            </Row>
          ))}
        </RowList>
      )}
    </PanelBody>
    <PanelTitle>
      {panel.title}
      {panel.more && <Caret $size={4} />}
    </PanelTitle>
  </Panel>
);

const App = () => (
  <Page>
    <GlobalStyle />
    <Header>
      <AppButton aria-label='Application menu'>
        <AutocadMark />
        <Caret $size={3} $color='#222' />
      </AppButton>
      <TitleBar>
        <QuickAccess>
          <IconButton aria-label='New'><NewIcon /></IconButton>
          <IconButton aria-label='Open'><OpenIcon /></IconButton>
          <IconButton aria-label='Save'><SaveIcon /></IconButton>
          <IconButton aria-label='Save as'><SaveIcon pencil /></IconButton>
          <IconButton aria-label='Print'><PrintIcon /></IconButton>
          <IconButton aria-label='Undo'><UndoIcon /></IconButton>
          <IconButton $width={10} aria-label='Undo list'><Caret $size={2} /></IconButton>
          <IconButton aria-label='Redo'><UndoIcon color='#8a8a8a' flip /></IconButton>
          <IconButton $width={10} aria-label='Redo list'><Caret $size={2} $color='#aaa' /></IconButton>
          <IconButton aria-label='Plot'><PlotIcon /></IconButton>
          <IconButton $width={12} aria-label='Customize'><BarCaretIcon /></IconButton>
        </QuickAccess>
        <Title>
          <span>Autodesk AutoCAD 2018 - STUDENT VERSION</span>
          <span>Drawing1.dwg</span>
        </Title>
        <InfoCenter>
          <SearchToggle $width={13} aria-label='Toggle search'>
            <Svg w={6} h={8}><path d='M1 0l4 4-4 4z' fill='#fff' /></Svg>
          </SearchToggle>
          <SearchInput aria-label='Search' placeholder='Type a keyword or phrase' />
          <IconButton $width={24} aria-label='Find'><BinocularsIcon /></IconButton>
          <SignIn>
            <UserIcon />
            <UserName>Sign In</UserName>
            <Caret $size={2} />
          </SignIn>
          <IconButton aria-label='App store'><CartIcon /></IconButton>
          <IconButton $width={26} aria-label='Stay connected'><ShareIcon /></IconButton>
          <Caret $size={2} />
          <Divider />
          <IconButton aria-label='Help'><HelpIcon /></IconButton>
          <IconButton $width={14} aria-label='Help menu'><Caret $size={2} /></IconButton>
        </InfoCenter>
        <WindowButtons>
          <IconButton $width={43} aria-label='Minimize'><MinimizeIcon /></IconButton>
          <IconButton $width={43} aria-label='Restore'><RestoreIcon /></IconButton>
          <IconButton $width={43} aria-label='Close'><CloseIcon /></IconButton>
        </WindowButtons>
      </TitleBar>
      <MenuTabs>
        {MENU.map((m) => (
          <MenuTab key={m} $active={m === 'Express Tools'}>{m}</MenuTab>
        ))}
        <MenuMore aria-label='Minimize ribbon'>
          <Svg w={13} h={8}>
            <rect width='13' height='8' rx='2' fill='#eee' />
            <path d='M4 5.500h5L6.500 2.500z' fill='#333' />
          </Svg>
          <Caret $size={2} />
        </MenuMore>
      </MenuTabs>
    </Header>

    <Ribbon>
      {PANELS.map((p) => <RibbonPanel key={p.title} panel={p} />)}
    </Ribbon>

    <FileTabs>
      <FileTab $width={115} $fill='#4e4e4e'>Start</FileTab>
      <FileTab $width={112} $fill='linear-gradient(#7a7a7a, #5c5c5c)' $active>
        Drawing1*
        <TabCloseIcon />
      </FileTab>
      <NewTab $height={14} $bottom={2} $left={10} aria-label='New drawing'><PlusIcon /></NewTab>
    </FileTabs>

    <Canvas>
      <Model />
      <ViewportBar>
        <span>[−][Top][Realistic]</span>
        <ViewportButtons>
          <IconButton $width={18} aria-label='Minimize drawing'>
            <Svg w={10}><path d='M0 6.500h10' stroke='#f4f4f4' strokeWidth='3' /></Svg>
          </IconButton>
          <IconButton $width={18} aria-label='Restore drawing'>
            <Svg w={10}>
              <path d='M1 3.500h6v6H1z' stroke='#f4f4f4' strokeWidth='2' />
              <path d='M3 1h6.500v6' stroke='#f4f4f4' />
            </Svg>
          </IconButton>
          <IconButton $width={18} aria-label='Close drawing'>
            <Svg w={10}><path d='M1 1l7 8M8 1L1 9' stroke='#f4f4f4' strokeWidth='2' /></Svg>
          </IconButton>
        </ViewportButtons>
      </ViewportBar>
      <ViewTools>
        <ViewCube />
        <WcsButton>
          WCS
          <Svg w={8} h={4}><path d='M0 1.500h8' stroke='#c9cbd0' /></Svg>
        </WcsButton>
      </ViewTools>
      <NavigationBar />
      <CommandArea>
        <History>
          <HistoryLine>Command:</HistoryLine>
          <HistoryLine>** STRETCH **</HistoryLine>
          <HistoryLine $latest>Specify stretch point or [Base point/Copy/Undo/eXit]:</HistoryLine>
        </History>
        <CommandBar>
          <CommandHandle>
            <Svg w={7} h={18}>
              <path d='M1.500 1v16M3.500 1v16M5.500 1v16' stroke='#a4a6aa' strokeDasharray='1 1' />
            </Svg>
            <IconButton $width={16} aria-label='Close command line'>
              <Svg w={10}><path d='M1 1l8 8M9 1L1 9' stroke='#dcdcdc' strokeWidth='2' /></Svg>
            </IconButton>
            <IconButton $width={18} aria-label='Customize command line'>
              <Svg w={14}>
                <path d='M5 5l7 7' stroke='#c8cacc' strokeWidth='3' />
                <path d='M4 1l0 3-3 0q0 4 4 3 3-1 2-4-1-2-3-2z' fill='#c8cacc' />
              </Svg>
            </IconButton>
          </CommandHandle>
          <IconButton $width={22} aria-label='Recent commands'>
            <Svg w={14} h={13}>
              <rect x='.5' y='.5' width='13' height='12' fill='#a4a7ae' stroke='#6b6e76' />
              <path d='M2.500 3.500l3 3-3 3M7 9.500h4' stroke='#3c3f48' strokeWidth='1.500' />
            </Svg>
          </IconButton>
          <Caret $color='#5c5f66' />
          <CommandInput aria-label='Command' placeholder='Type a command' />
          <IconButton $width={14} aria-label='Expand history'>
            <Svg w={8} h={5}><path d='M0 5l4-4 4 4z' fill='#222' /></Svg>
          </IconButton>
        </CommandBar>
      </CommandArea>
    </Canvas>

    <StatusBar>
      <LayoutTabs>
        <LayoutTab $down $width={49} $fill='linear-gradient(#6c6c6c, #8a8a8a)' $active>Model</LayoutTab>
        <LayoutTab $down $width={66} $fill='#5a5a5a'>Layout1</LayoutTab>
        <NewTab $height={15} $left={3} aria-label='New layout'><PlusIcon /></NewTab>
      </LayoutTabs>
      <StatusTools>
        <StatusGroup $width={48}><StatusText>MODEL</StatusText></StatusGroup>
        <StatusGroup $width={62}>
          <GridIcon /><SnapIcon /><Caret />
        </StatusGroup>
        <StatusGroup $width={96}>
          <OrthoIcon /><PolarIcon /><Caret /><IsoIcon /><Caret />
        </StatusGroup>
        <StatusGroup $width={60}>
          <TrackIcon /><OsnapIcon /><Caret />
        </StatusGroup>
        <StatusGroup $width={24}><LineweightIcon /></StatusGroup>
        <StatusGroup $width={24}><CyclingIcon /></StatusGroup>
        <StatusGroup $width={101}>
          <ScaleIcon color='#2b7ff0' extra='ring' />
          <ScaleIcon color='#c8c8c8' extra='bolt' />
          <ScaleIcon color='#c8c8c8' />
          <ScaleButton>1:1<Caret /></ScaleButton>
        </StatusGroup>
        <StatusGroup $width={38}>
          <GearIcon /><Caret />
        </StatusGroup>
        <StatusGroup $width={25}><CrossIcon /></StatusGroup>
        <StatusGroup $width={26}><ShapesIcon /></StatusGroup>
        <StatusGroup $width={25}><HardwareIcon /></StatusGroup>
        <StatusGroup $width={27}><CleanIcon /></StatusGroup>
        <StatusGroup $width={19}><MenuIcon /></StatusGroup>
      </StatusTools>
    </StatusBar>

    <Taskbar>
      <TaskGroup $width={520}>
        {TASKS.map((t) => (
          <TaskButton key={t.name} aria-label={t.name} $open={t.open} $current={t.current}>{t.icon}</TaskButton>
        ))}
      </TaskGroup>
      <Tray>
        <IconButton $width={22} aria-label='Hidden icons'>
          <Svg w={12}><path d='M1 8l5-5 5 5' stroke='#eee' strokeWidth='1.500' /></Svg>
        </IconButton>
        <IconButton $width={24} aria-label='Volume'>
          <Svg w={16}>
            <path d='M1 6h3l3-3v10l-3-3H1z' stroke='#eee' />
            <path d='M9 6q1.500 2 0 4M11 4.500q3 3.500 0 7M13 3q4 5 0 10' stroke='#eee' />
          </Svg>
        </IconButton>
        <IconButton $width={24} aria-label='Network'>
          <Svg w={14}>
            <path d='M1 13A12 12 0 0 1 13 2M4 13a9 9 0 0 1 9-8M7 13a6 6 0 0 1 6-5' stroke='#c9c4c0' strokeWidth='1.500' />
            <path d='M10 13a3 3 0 0 1 3-3v3z' fill='#fff' />
          </Svg>
        </IconButton>
        <IconButton $width={22} aria-label='Battery'>
          <Svg w={15} h={10}>
            <path d='M.5 1.500h12v7H.5z' stroke='#eee' />
            <path d='M2 3h6v4H2zM13 3.500h2v3h-2z' fill='#eee' />
          </Svg>
        </IconButton>
        <IconButton $width={22} aria-label='Account'>
          <Svg w={14}>
            <circle cx='7' cy='7' r='6' fill='#e8c22c' />
            <circle cx='7' cy='5.500' r='2.500' fill='#4a4a3a' />
            <path d='M2 14q1-5 5-5t5 5z' fill='#f3f3f3' />
          </Svg>
        </IconButton>
        <Clock>5:05 PM</Clock>
        <IconButton aria-label='Notifications'>
          <Svg w={16}>
            <path d='M0 1h16v11h-5l-3 3-3-3H0z' fill='#fff' />
            <path d='M3 4.500h10M3 6.500h10M3 8.500h7' stroke='#555' />
          </Svg>
        </IconButton>
      </Tray>
      <Watermark>MahaGurus.com</Watermark>
    </Taskbar>
  </Page>
);

export default App;
